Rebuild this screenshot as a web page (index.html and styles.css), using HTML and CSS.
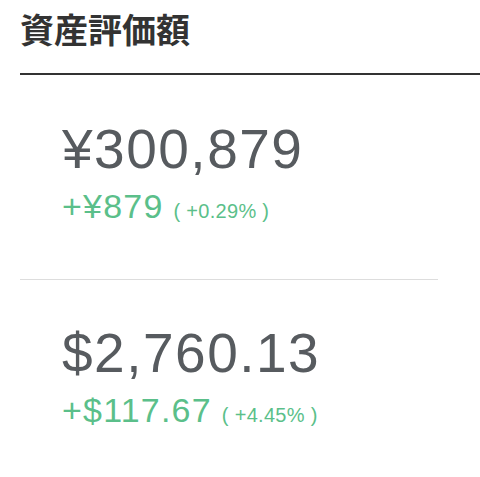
FILE: index.html
```html
<!DOCTYPE html>
<html lang="ja">
<head>
<meta charset="utf-8">
<link rel="stylesheet" href="styles.css">
</head>
<body>
<header class="header">
  <h1 class="title">資産評価額</h1>
</header>
<section class="item item-first">
  <div class="value">¥300,879</div>
  <div class="change"><span class="change-amount">+¥879</span><span class="change-pct">( +0.29% )</span></div>
</section>
<hr class="divider">
<section class="item item-second">
  <div class="value">$2,760.13</div>
  <div class="change"><span class="change-amount">+$117.67</span><span class="change-pct">( +4.45% )</span></div>
</section>
</body>
</html>
```

FILE: styles.css
```css
html, body {
  margin: 0;
  padding: 0;
  background: #fff;
}
body {
  font-family: "Liberation Sans", Arial, "Noto Sans CJK JP", sans-serif;
  width: 480px;
  height: 477px;
  overflow: hidden;
}
.header {
  margin-left: 20px;
  padding-top: 12px;
  padding-bottom: 27px;
  border-bottom: 2px solid #333;
}
.title {
  margin: 0;
  font-family: "Noto Sans CJK JP", "Liberation Sans", sans-serif;
  font-weight: 700;
  font-size: 34px;
  line-height: 34px;
  color: #333;
}
.item {
  padding-left: 62px;
}
.item-first {
  padding-top: 47px;
  padding-bottom: 51px;
}
.item-second {
  padding-top: 46px;
}
.value {
  font-size: 55px;
  line-height: 55px;
  letter-spacing: 1.5px;
  color: #575b5f;
}
.change {
  margin-top: 12px;
  color: #5bbf8a;
  line-height: 34px;
  display: flex;
  align-items: baseline;
}
.change-amount {
  font-size: 34px;
  letter-spacing: 1.2px;
}
.change-pct {
  font-size: 20px;
  margin-left: 10px;
  letter-spacing: 0.3px;
}
.divider {
  margin: 0 0 0 20px;
  width: 418px;
  border: 0;
  border-top: 1px solid #ddd;
  height: 0;
}
```
